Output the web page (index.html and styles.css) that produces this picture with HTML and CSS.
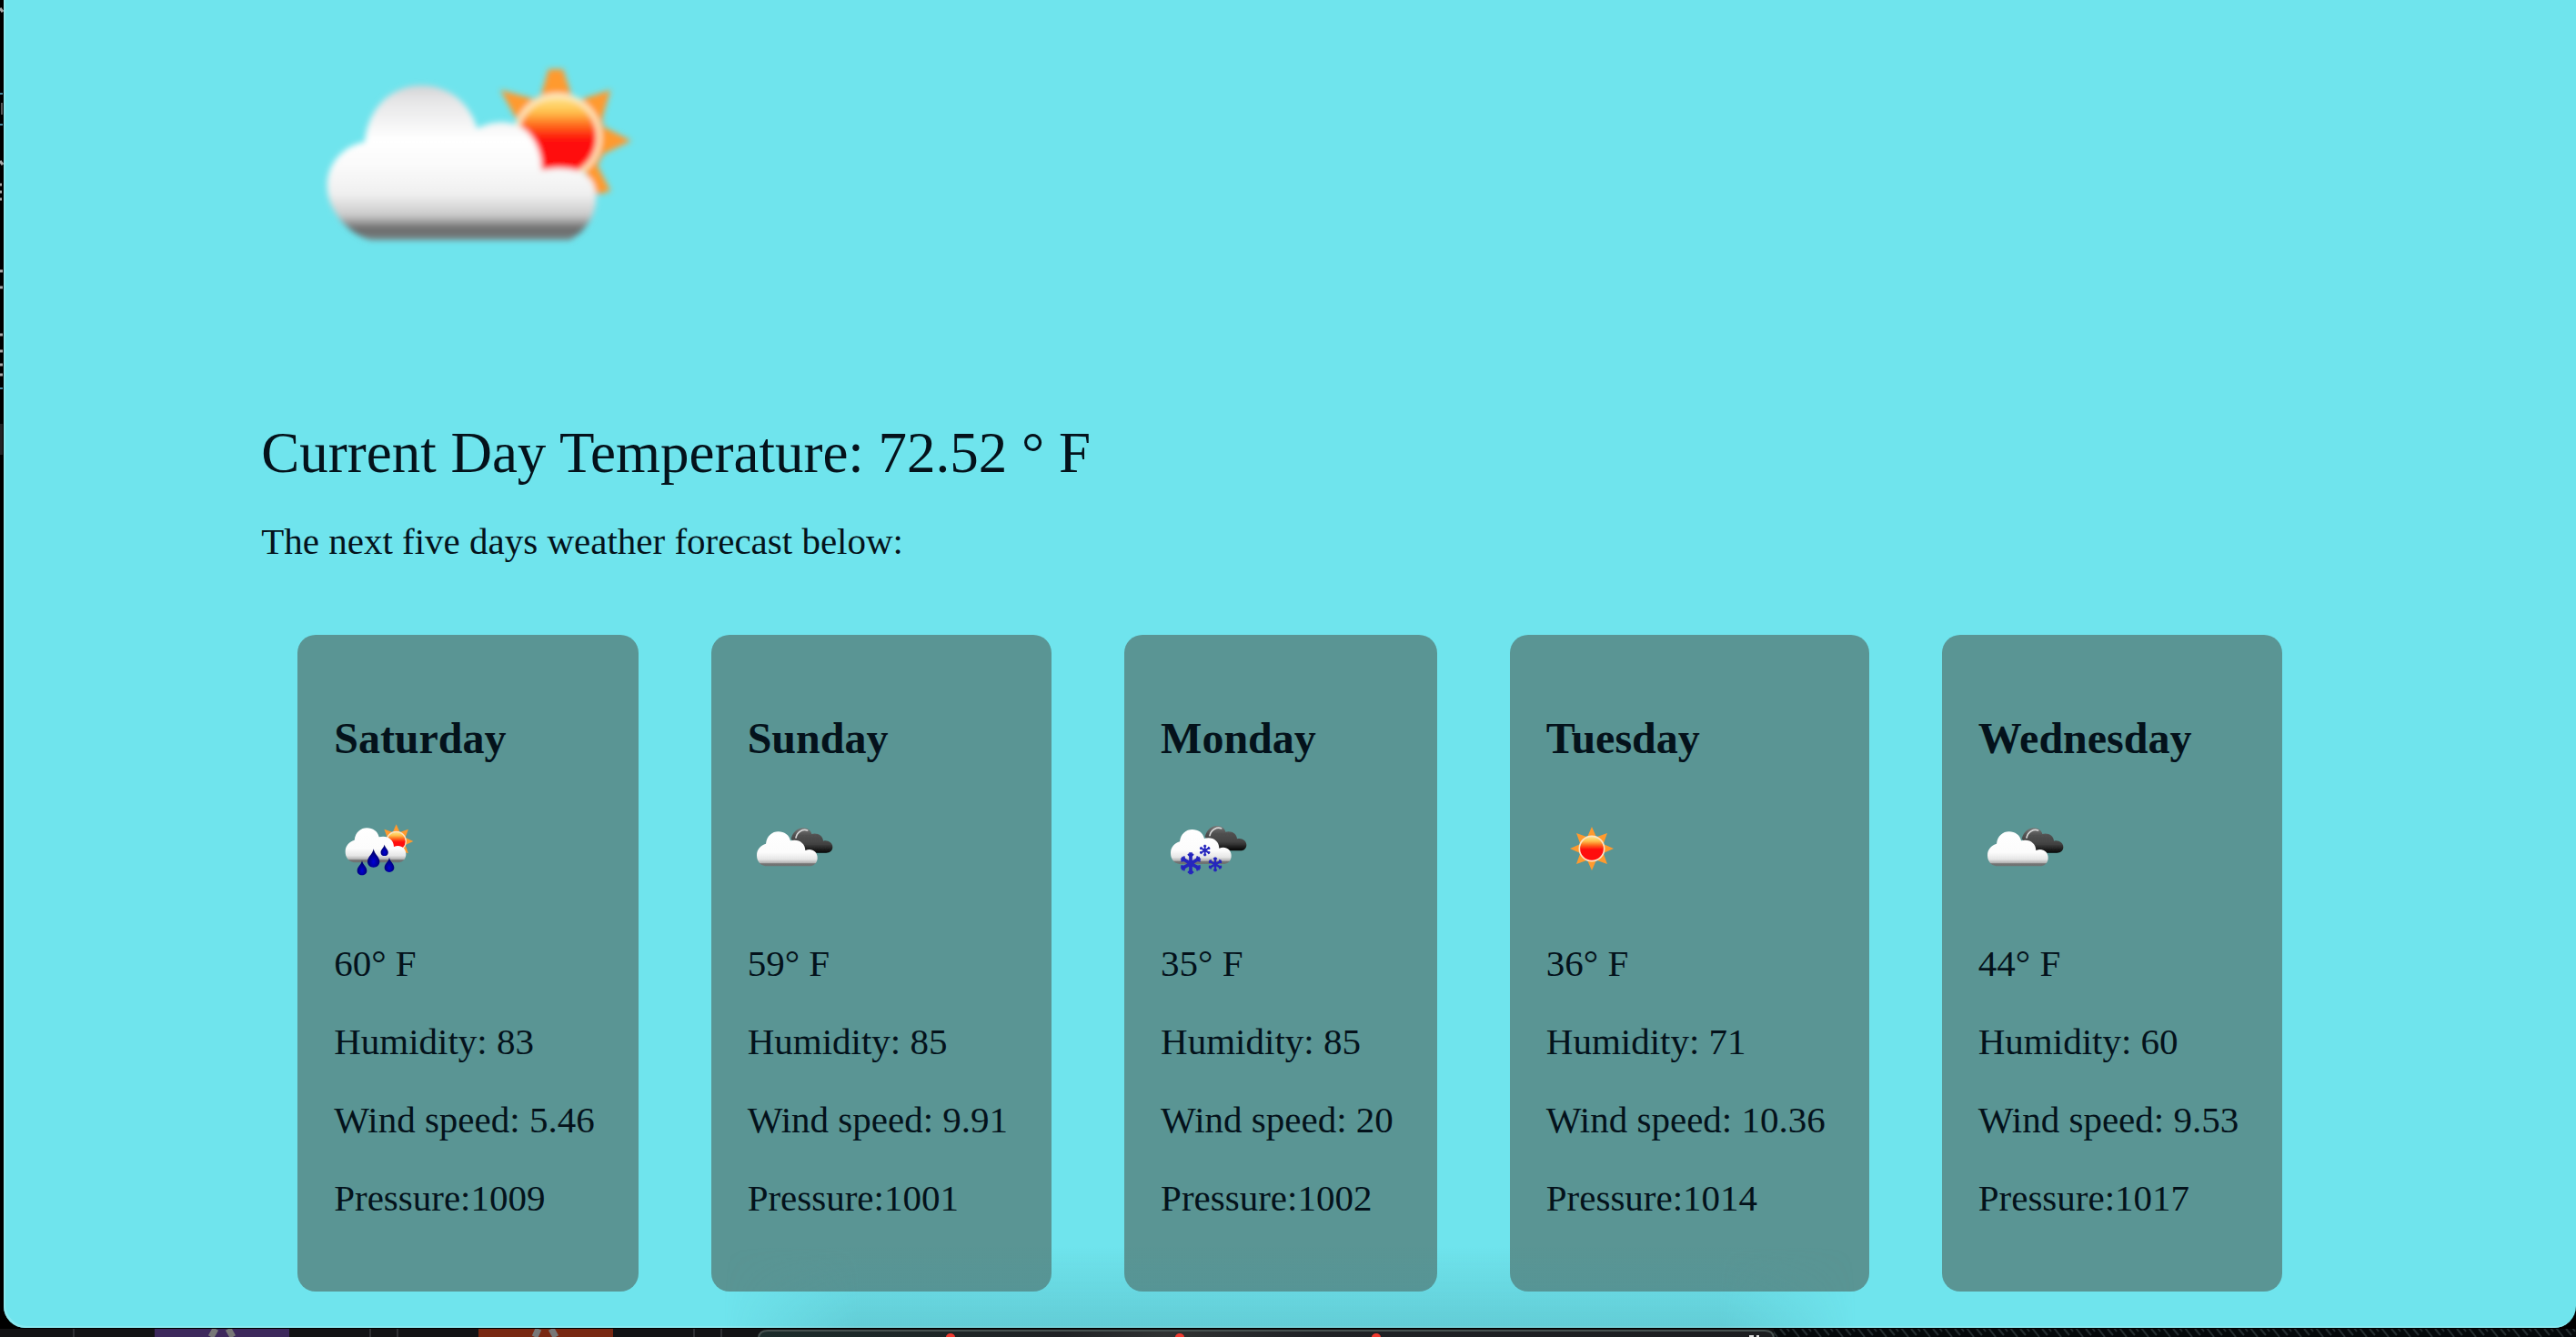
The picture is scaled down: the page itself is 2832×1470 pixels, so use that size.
FILE: index.html
```html
<!DOCTYPE html>
<html lang="en">
<head>
<meta charset="utf-8">
<title>Weather forecast</title>
<link rel="stylesheet" href="styles.css">
</head>
<body>
<svg class="defs" width="0" height="0" aria-hidden="true">
  <defs>
    <linearGradient id="cloud" x1="0" y1="0" x2="0" y2="1">
      <stop offset="0" stop-color="#d4d4d6"/><stop offset=".1" stop-color="#e6e6e7"/><stop offset=".35" stop-color="#fff"/>
      <stop offset=".5" stop-color="#fbfbfb"/><stop offset=".7" stop-color="#f0f0f0"/><stop offset=".84" stop-color="#cacaca"/>
      <stop offset=".93" stop-color="#686868"/><stop offset="1" stop-color="#7b8788"/>
    </linearGradient>
    <linearGradient id="cloudS" x1="0" y1="0" x2="0" y2="1">
      <stop offset="0" stop-color="#fff"/><stop offset=".6" stop-color="#fcfcfc"/><stop offset=".8" stop-color="#e6e6e6"/>
      <stop offset=".9" stop-color="#b4b4b4"/><stop offset=".93" stop-color="#747474"/><stop offset="1" stop-color="#6c7272"/>
    </linearGradient>
    <linearGradient id="dark" x1="0" y1="0" x2="0" y2="1">
      <stop offset="0" stop-color="#777"/><stop offset=".3" stop-color="#505050"/><stop offset=".65" stop-color="#424242"/><stop offset="1" stop-color="#050505"/>
    </linearGradient>
    <linearGradient id="sun" x1="0" y1="0" x2="0" y2="1">
      <stop offset="0" stop-color="#ffe98f"/><stop offset=".2" stop-color="#ffc04c"/><stop offset=".36" stop-color="#ff6a1c"/>
      <stop offset=".54" stop-color="#ff0a0c"/><stop offset="1" stop-color="#ff0a0c"/>
    </linearGradient>
    <radialGradient id="drop" cx=".5" cy=".7" r=".6"><stop offset="0" stop-color="#0000d8"/><stop offset="1" stop-color="#000060"/></radialGradient>
    <filter id="soft" x="-10%" y="-10%" width="120%" height="120%"><feGaussianBlur stdDeviation="9"/></filter>
    <filter id="softS" x="-10%" y="-10%" width="120%" height="120%"><feGaussianBlur stdDeviation="2"/></filter>
    <g id="sunShape">
      <path fill="#ff9a2e" d="M0-72 15-38 51-51 38-15 72 0 38 15 51 51 15 38 0 72-15 38-51 51-38 15-72 0-38-15-51-51-15-38Z"/>
      <circle r="41" fill="url(#sun)" stroke="#fce4c4" stroke-width="5"/>
    </g>
    <g id="darkCloud">
      <path fill="url(#dark)" d="M326 130C332 106 348 94 366 94 382 94 391 103 394 114 412 108 432 120 432 137 448 133 463 143 463 157 463 169 454 176 442 176H375Z"/>
      <path fill="none" stroke="#d8d8d8" stroke-width="5" stroke-linecap="round" d="M342 126C346 106 366 96 380 102"/>
    </g>
    <path id="whiteCloud" fill="url(#cloudS)" d="M241 220C222 216 213 202 213 184 213 164 226 151 243 146 246 120 264 106 284 106 304 106 320 117 324 136 350 128 373 144 373 168 394 159 413 172 413 192 413 208 404 217 391 220Z"/>
    <g id="flake" fill="none" stroke="#2525bd" stroke-width="11">
      <path d="M0-36V36M-31-18 31 18M-31 18 31-18"/>
      <path stroke-width="6" d="M-9-31 0-22 9-31M-9 31 0 22 9 31M-32-8-19-11-23-24M32 8 19 11 23 24M-32 8-19 11-23 24M32-8 19-11 23-24"/>
    </g>
    <path id="rain" fill="url(#drop)" d="M0-30C3-12 20-4 20 12 20 24 11 31 0 31S-20 24-20 12C-20-4-3-12 0-30Z"/>
  </defs>
</svg>

<main class="window">
  <svg class="now-icon" viewBox="0 0 1260 720" role="img" aria-label="Partly cloudy">
    <g filter="url(#soft)">
      <path fill="#ff9a2e" d="M849 78H897L926 168 950 180 1054 146 1026 240 1030 268 1122 314 1030 358 1010 395 1054 480 1008 492 970 420 770 290 690 146 800 176 824 164Z"/>
      <circle cx="879" cy="302" r="137" fill="url(#sun)" stroke="#fdeac2" stroke-width="16"/>
      <path fill="url(#cloud)" d="M264 642C214 630 168 592 143 546 82 440 146 335 243 318 254 205 330 132 430 132 520 132 590 190 614 274 670 244 735 244 780 285 810 318 828 360 826 410 905 398 965 405 994 450 1020 500 1006 597 918 642Z"/>
    </g>
  </svg>
  <h1 class="temperature">Current Day Temperature: 72.52 ° F</h1>
  <p class="intro">The next five days weather forecast below:</p>

  <section class="forecast">
    <article class="card">
      <h2>Saturday</h2>
      <svg class="icon" viewBox="171 615 300 300" role="img" aria-label="Rain with sun">
        <g filter="url(#softS)">
          <use href="#sunShape" transform="translate(377 738) scale(.78)"/>
          <use href="#whiteCloud" transform="translate(-4 588)"/>
          <use href="#rain" transform="translate(302 793)"/>
          <use href="#rain" transform="translate(264 825) scale(.8)"/>
          <use href="#rain" transform="translate(354 815) scale(.8)"/>
          <use href="#rain" transform="translate(338 767) scale(.62)"/>
        </g>
      </svg>
      <p>60° F</p><p>Humidity: 83</p><p>Wind speed: 5.46</p><p>Pressure:1009</p>
    </article>
    <article class="card">
      <h2>Sunday</h2>
      <svg class="icon" viewBox="183 15 300 300" role="img" aria-label="Cloudy">
        <g filter="url(#softS)"><use href="#darkCloud"/><use href="#whiteCloud"/></g>
      </svg>
      <p>59° F</p><p>Humidity: 85</p><p>Wind speed: 9.91</p><p>Pressure:1001</p>
    </article>
    <article class="card">
      <h2>Monday</h2>
      <svg class="icon" viewBox="168 15 300 300" role="img" aria-label="Snow">
        <g filter="url(#softS)">
          <g transform="translate(-12 -7)"><use href="#darkCloud"/><use href="#whiteCloud"/></g>
          <use href="#flake" transform="translate(267 211)"/>
          <use href="#flake" transform="translate(314 168) scale(.52)"/>
          <use href="#flake" transform="translate(348 214) scale(.66)"/>
        </g>
      </svg>
      <p>35° F</p><p>Humidity: 85</p><p>Wind speed: 20</p><p>Pressure:1002</p>
    </article>
    <article class="card">
      <h2>Tuesday</h2>
      <svg class="icon" viewBox="120 15 300 300" role="img" aria-label="Sunny">
        <g filter="url(#softS)"><use href="#sunShape" transform="translate(270 162)"/></g>
      </svg>
      <p>36° F</p><p>Humidity: 71</p><p>Wind speed: 10.36</p><p>Pressure:1014</p>
    </article>
    <article class="card">
      <h2>Wednesday</h2>
      <svg class="icon" viewBox="183 15 300 300" role="img" aria-label="Cloudy">
        <g filter="url(#softS)"><use href="#darkCloud"/><use href="#whiteCloud"/></g>
      </svg>
      <p>44° F</p><p>Humidity: 60</p><p>Wind speed: 9.53</p><p>Pressure:1017</p>
    </article>
  </section>
  <div class="dock-shadow"></div>
</main>

<svg class="edge" width="4" height="500" viewBox="0 0 4 500" aria-hidden="true">
  <path stroke="#aaa" stroke-width="3" d="M0 9 3 13M0 177 3 181M0 203H2M0 211H2M0 219H2M0 298H3M0 316H3M0 368H3M0 386H3M0 401H3M0 412H3"/>
  <path stroke="#4a8ba0" stroke-width="2" d="M0 103H3M0 137H3M0 427H3"/>
  <path stroke="#aaa" d="M2 113V126"/>
  <path fill="#222224" d="M0 466H3V500H0Z"/>
</svg>

<svg class="desktop" viewBox="0 0 2832 10" preserveAspectRatio="none" aria-hidden="true">
  <defs>
    <linearGradient id="dock"><stop offset="0" stop-color="#1c2c2b"/><stop offset=".3" stop-color="#202225"/><stop offset=".4" stop-color="#303233"/><stop offset=".55" stop-color="#202226"/><stop offset="1" stop-color="#1c1d20"/></linearGradient>
    <pattern id="grain" width="24" height="10" patternUnits="userSpaceOnUse"><path stroke="#252d30" stroke-width="2" d="M2 0 10 10M13 1 19 8M20 0 23 4"/></pattern>
  </defs>
  <path fill="#131315" d="M0 0H2832V10H0Z"/>
  <path fill="#05090b" d="M1950 0H2832V10H1950Z"/>
  <path fill="url(#grain)" d="M1950 1H2832V10H1950Z"/>
  <path fill="#3d285c" d="M170 1H318V10H170Z"/>
  <path fill="#792812" d="M526 1H674V10H526Z"/>
  <path stroke="#777" stroke-width="7" d="M237 1 232 10M251 1 256 10M592 1 588 10M606 1 611 10"/>
  <path stroke="#303033" stroke-width="2" d="M81 1V10M407 1V10M437 1V10M763 1V10M793 1V10"/>
  <path fill="url(#dock)" stroke="#46504f" stroke-width="2" d="M834 12C834 6 838 3 844 3H1940C1947 3 1950 6 1950 12Z"/>
  <path fill="#f0392f" d="M1040 10A5 4 0 0 1 1050 10ZM1292 10A5 4 0 0 1 1302 10ZM1508 10A5 4 0 0 1 1518 10Z"/>
  <path stroke="#ddd" stroke-width="2" d="M1923 9H1928M1931 9H1934"/>
  <path fill="#000" d="M0 0H2832V1H0Z"/>
</svg>
</body>
</html>
```
FILE: styles.css
```css
* {
  box-sizing: border-box;
}

body {
  position: relative;
  display: flex;
  flex-direction: column;
  min-height: 100vh;
  margin: 0;
  background: #000;
  color: #04121b;
  font-family: Baskerville, "Liberation Serif", serif;
  font-size: 41px;
  line-height: 46px;
}

.defs {
  position: absolute;
}

.window {
  position: relative;
  flex: 1;
  margin-left: 4px;
  padding: 50px 10% 40px;
  overflow: hidden;
  background: #6fe4ed;
  border-radius: 0 0 24px 24px;
  box-shadow: inset 2px -2px 0 #88e8ef;
}

.now-icon {
  display: block;
  width: 420px;
  height: 240px;
  margin-left: 33px;
}

.temperature {
  margin: 173px 0 39px;
  font-size: 63px;
  font-weight: 400;
  line-height: 70px;
}

.intro {
  margin: 0;
}

.forecast {
  display: flex;
  gap: 80px;
  margin: 80px 40px 0;
}

.card {
  padding: 40px 48px 40px 40px;
  background: #5a9594;
  border-radius: 20px;
}

.card h2 {
  margin: 46px 0 44px;
  font-size: 48px;
  line-height: 56px;
}

.card p {
  margin: 40px 0;
  white-space: nowrap;
}

.icon {
  display: block;
  width: 100px;
  height: 100px;
  margin-bottom: 52px;
}

.dock-shadow {
  position: absolute;
  right: 28%;
  bottom: 0;
  left: 28%;
  height: 90px;
  background: linear-gradient(transparent, rgba(70, 150, 160, 0.3));
  mask-image: linear-gradient(90deg, transparent, #000 12%, #000 88%, transparent);
}

.edge {
  position: absolute;
  top: 0;
  left: 0;
}

.desktop {
  display: block;
  width: 100%;
  height: 10px;
}
```
